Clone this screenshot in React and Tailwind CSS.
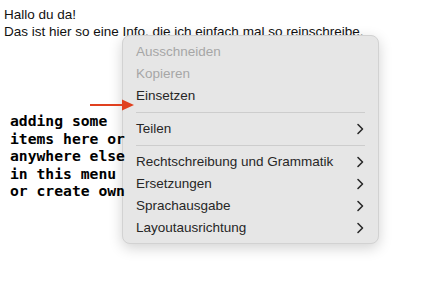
import React from "react";

const Chevron = () => (
  <svg width="8" height="12" viewBox="0 0 8 12" className="shrink-0">
    <path d="M2 1.5 L6.5 6 L2 10.5" fill="none" stroke="#2a2a2a" strokeWidth="1.6" strokeLinecap="round" strokeLinejoin="round" />
  </svg>
);

function Item({ label, disabled, sub }) {
  return (
    <div className={`flex items-center justify-between h-[22px] pl-[13px] pr-[14px] ${disabled ? "text-[#a6a6a6]" : "text-[#262626]"}`}>
      <span>{label}</span>
      {sub && <Chevron />}
    </div>
  );
}

const Sep = () => <div className="mx-[13px] my-[5px] h-px bg-[#cdcdcd]" />;

export default function App() {
  return (
    <div className="relative w-[424px] h-[282px] bg-white overflow-hidden font-['Liberation_Sans',Arial,sans-serif]">
      <div className="pl-[4px] pt-[6px] text-[13.5px] leading-[17px] text-[#111]">
        <div>Hallo du da!</div>
        <div>Das ist hier so eine Info. die ich einfach mal so reinschreibe.</div>
      </div>

      <div className="absolute left-[122px] top-[35px] w-[257px] rounded-[8px] bg-[#e6e6e6] border border-[#d2d2d2] shadow-[0_4px_14px_rgba(0,0,0,0.18)] pt-[5px] pb-[4px] text-[13.5px]">
        <Item label="Ausschneiden" disabled />
        <Item label="Kopieren" disabled />
        <Item label="Einsetzen" />
        <Sep />
        <Item label="Teilen" sub />
        <Sep />
        <Item label="Rechtschreibung und Grammatik" sub />
        <Item label="Ersetzungen" sub />
        <Item label="Sprachausgabe" sub />
        <Item label="Layoutausrichtung" sub />
      </div>

      <div className="absolute left-[10px] top-[112px] font-['DejaVu_Sans_Mono',monospace] font-bold text-[14.7px] leading-[17.5px] text-black whitespace-pre">
        {"adding some\nitems here or\nanywhere else\nin this menu\nor create own"}
      </div>

      <svg className="absolute left-[88px] top-[98px]" width="48" height="14" viewBox="0 0 48 14">
        <line x1="2" y1="7" x2="36" y2="7" stroke="#e0401f" strokeWidth="2" />
        <polygon points="34,1.5 46,7 34,12.5" fill="#e0401f" />
      </svg>
    </div>
  );
}
